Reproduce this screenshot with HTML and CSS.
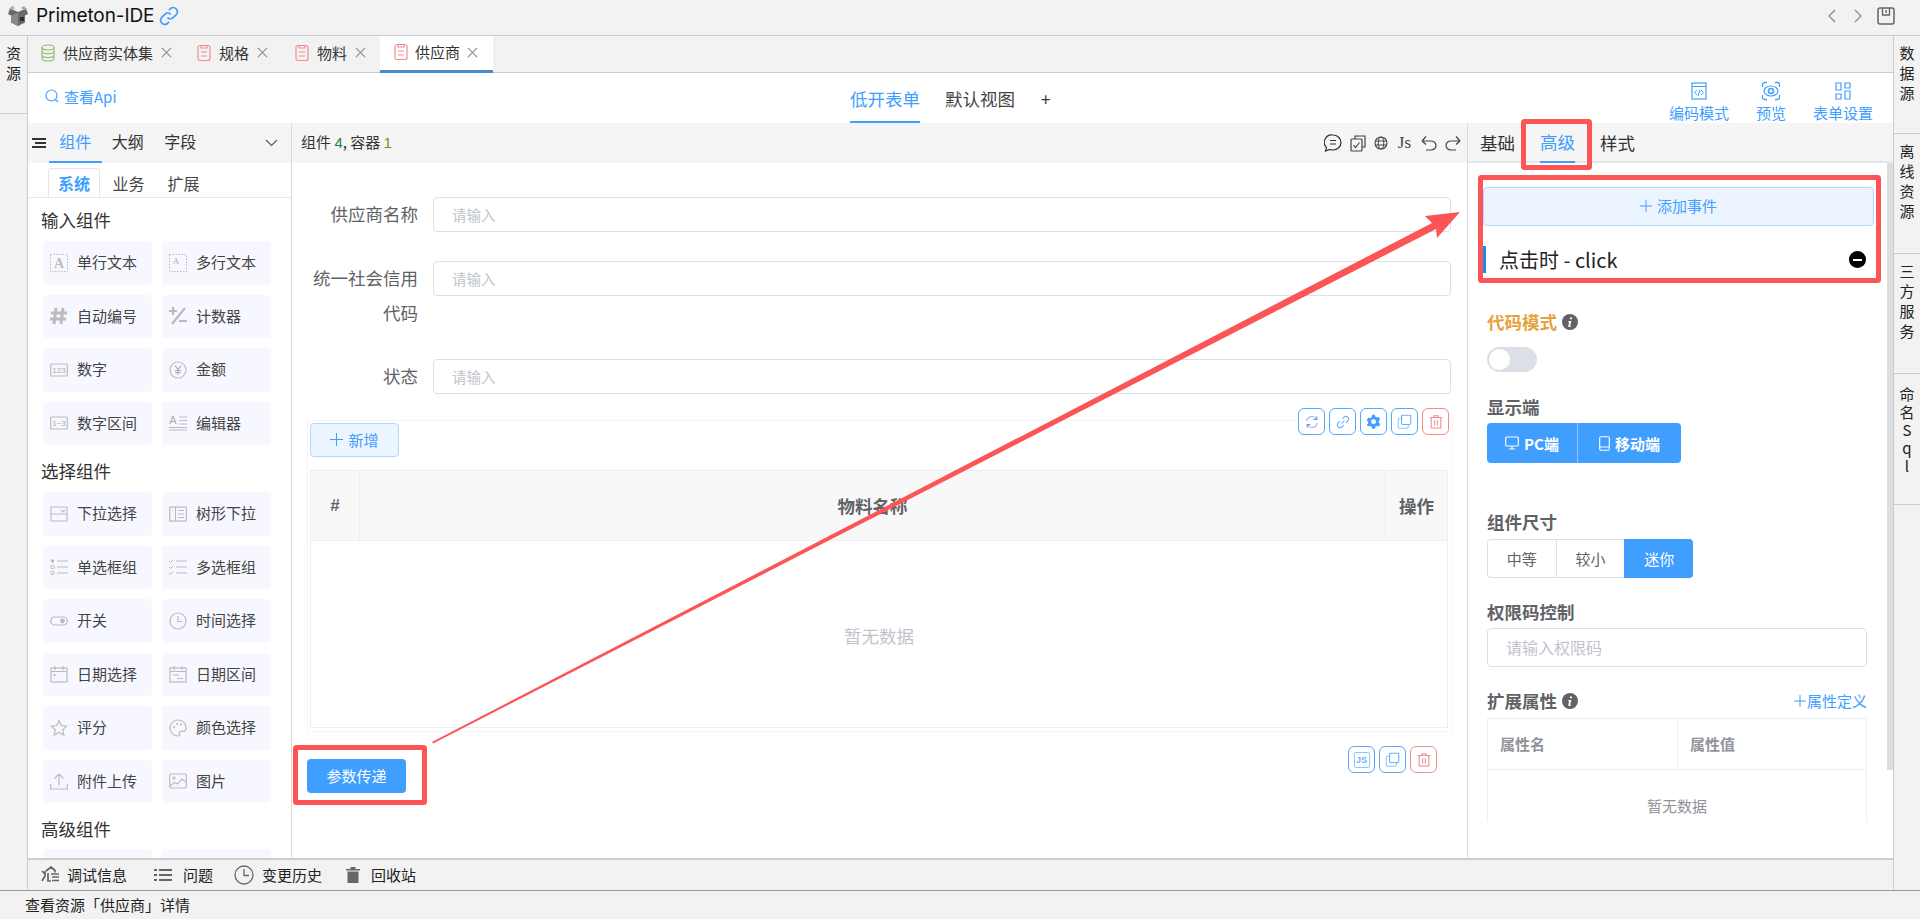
FILE: index.html
```html
<!DOCTYPE html>
<html lang="zh-CN">
<head>
<meta charset="utf-8">
<title>Primeton-IDE</title>
<link rel="stylesheet" href="styles.css">
</head>
<body>
<svg class="defs" width="0" height="0" aria-hidden="true">
  <defs>
    <symbol id="i-doc" viewBox="0 0 14 18"><rect x="1" y="1.5" width="12" height="15" rx="2" fill="none" stroke="currentColor" stroke-width="1.2"/><path d="M4 1.5v2.5h6V1.5M4 8h6M4 12h6" fill="none" stroke="currentColor" stroke-width="1.2"/></symbol>
    <symbol id="i-x" viewBox="0 0 12 12"><path d="M1 1l10 10M11 1L1 11" fill="none" stroke="currentColor" stroke-width="1.1"/></symbol>
    <symbol id="i-info" viewBox="0 0 16 16"><circle cx="8" cy="8" r="8" fill="currentColor"/><path d="M9 3.2a1.1 1.1 0 1 1-.01 0zM6.4 7h3l-1.2 4.6c-.1.4.3.5 1 .1v.9c-1 .6-3.2 1-2.9-.7l.8-3.7H6.3z" fill="#fff"/></symbol>
    <symbol id="i-copy" viewBox="0 0 18 18"><rect x="5.500" y="1.500" width="11" height="11" rx="1" fill="none" stroke="#66b1ff" stroke-width="1.300"/><path d="M5.500 5H3a1.500 1.500 0 0 0-1.500 1.500v9A1.500 1.500 0 0 0 3 17h9a1.500 1.500 0 0 0 1.500-1.500v-3" fill="none" stroke="#8cc5ff" stroke-width="1.300"/></symbol>
    <symbol id="i-trash" viewBox="0 0 16 16"><path d="M1 3.500h14M5.500 3.500V1.500h5v2M2.500 3.500v12h11v-12M6.500 6.500v6M9.500 6.500v6" fill="none" stroke="#f78989" stroke-width="1.200"/></symbol>
  </defs>
</svg>

<div class="app">
  <header class="topbar">
    <svg class="logo" width="22" height="22" viewBox="0 0 22 22"><path d="M11 7L3 3.500 1 9l3 1.500v7l7 3.500 7-3.500v-7L21 9l-2-5.500z" fill="#6a6a6a"/><path d="M11 8l-7 2.500v7l7 3.500z" fill="#8a8a8a"/><path d="M2 4l3-3 3 2-3 2zM20 4l-3-3-3 2 3 2z" fill="#a8a8a8"/><rect x="13" y="12" width="4" height="4" fill="#2e2e2e"/></svg>
    <span class="app-title">Primeton-IDE</span>
    <svg class="link-icon" width="20" height="20" viewBox="0 0 24 24"><path d="M10 14a5 5 0 0 0 7 0l4-4a5 5 0 0 0-7-7l-2 2M14 10a5 5 0 0 0-7 0l-4 4a5 5 0 0 0 7 7l2-2" fill="none" stroke="#409eff" stroke-width="2"/></svg>
    <div class="top-right">
      <svg width="10" height="16" viewBox="0 0 10 16"><path d="M8 2L2 8l6 6" fill="none" stroke="#888" stroke-width="1.200"/></svg>
      <svg width="10" height="16" viewBox="0 0 10 16"><path d="M2 2l6 6-6 6" fill="none" stroke="#888" stroke-width="1.200"/></svg>
      <svg class="save-icon" width="18" height="18" viewBox="0 0 18 18"><rect x="1" y="1" width="16" height="16" rx="2" fill="none" stroke="#666" stroke-width="1.500"/><path d="M5.500 1v7h7V1M9 3v3" fill="none" stroke="#666" stroke-width="1.300"/></svg>
    </div>
  </header>

  <div class="workspace">
    <aside class="rail rail-left">
      <div class="rail-item rail-item-short">资<br>源</div>
    </aside>

    <div class="center">
      <nav class="tabs">
        <div class="tab tab-first">
          <svg class="tab-icon tab-icon-db" width="14" height="18" viewBox="0 0 14 18"><ellipse cx="7" cy="3.500" rx="6" ry="2.500" fill="none" stroke="currentColor" stroke-width="1.200"/><path d="M1 3.500v11c0 1.400 2.700 2.500 6 2.500s6-1.100 6-2.500v-11M1 7.200c0 1.400 2.700 2.500 6 2.500s6-1.100 6-2.500M1 11c0 1.400 2.700 2.500 6 2.500s6-1.100 6-2.500" fill="none" stroke="currentColor" stroke-width="1.200"/></svg>
          <span>供应商实体集</span>
          <svg class="tab-close" width="11" height="11"><use href="#i-x"/></svg>
        </div>
        <div class="tab">
          <svg class="tab-icon" width="14" height="18"><use href="#i-doc"/></svg>
          <span>规格</span>
          <svg class="tab-close" width="11" height="11"><use href="#i-x"/></svg>
        </div>
        <div class="tab">
          <svg class="tab-icon" width="14" height="18"><use href="#i-doc"/></svg>
          <span>物料</span>
          <svg class="tab-close" width="11" height="11"><use href="#i-x"/></svg>
        </div>
        <div class="tab tab-active">
          <svg class="tab-icon" width="14" height="18"><use href="#i-doc"/></svg>
          <span>供应商</span>
          <svg class="tab-close" width="11" height="11"><use href="#i-x"/></svg>
        </div>
      </nav>

      <div class="toolbar">
        <div class="api-link">
          <svg width="14" height="14" viewBox="0 0 14 14"><circle cx="6.500" cy="6.500" r="5.500" fill="none" stroke="#409eff" stroke-width="1.100"/><path d="M10.500 10.500l2.500 2.500" stroke="#409eff" stroke-width="1.100"/></svg>
          <span>查看Api</span>
        </div>
        <div class="view-tabs">
          <span class="view-tab view-tab-active">低开表单</span>
          <span class="view-tab">默认视图</span>
          <span class="view-add">+</span>
        </div>
        <div class="tool-actions">
          <div class="tool-action">
            <svg width="18" height="20" viewBox="0 0 18 20"><rect x="2" y="2" width="14" height="16" fill="none" stroke="#409eff" stroke-width="1.200"/><path d="M2 5.500h14M7 9l-2.500 2.500L7 14M11 9l2.500 2.500L11 14M10 8.500l-2 6.500" fill="none" stroke="#409eff" stroke-width="1"/></svg>
            <span>编码模式</span>
          </div>
          <div class="tool-action">
            <svg width="20" height="20" viewBox="0 0 20 20"><path d="M1.500 6V3.500a2 2 0 0 1 2-2H6M14 1.500h2.500a2 2 0 0 1 2 2V6M18.500 14v2.500a2 2 0 0 1-2 2H14M6 18.500H3.500a2 2 0 0 1-2-2V14" fill="none" stroke="#409eff" stroke-width="1.300"/><ellipse cx="10" cy="10" rx="7" ry="5" fill="none" stroke="#409eff" stroke-width="1.200"/><circle cx="10" cy="10" r="2.500" fill="none" stroke="#409eff" stroke-width="1.500"/></svg>
            <span>预览</span>
          </div>
          <div class="tool-action">
            <svg width="18" height="20" viewBox="0 0 18 20"><path d="M2 2h5v7H2zM11 2h5v5h-5zM2 13h5v5H2zM11 10h5v8h-5z" fill="none" stroke="#409eff" stroke-width="1.200"/></svg>
            <span>表单设置</span>
          </div>
        </div>
      </div>

      <div class="editor">
        <section class="palette">
          <div class="pal-head">
            <svg class="pal-menu" width="14" height="10" viewBox="0 0 14 10"><path d="M0 1h14M3 5h11M0 9h14" stroke="#333" stroke-width="2"/></svg>
            <span class="pal-tab pal-tab-active">组件</span>
            <span class="pal-tab">大纲</span>
            <span class="pal-tab">字段</span>
            <svg class="pal-chev" width="13" height="8" viewBox="0 0 13 8"><path d="M1 1l5.500 5.500L12 1" fill="none" stroke="#555" stroke-width="1.100"/></svg>
          </div>
          <div class="pal-sub">
            <span class="sub-tab sub-tab-active">系统</span>
            <span class="sub-tab">业务</span>
            <span class="sub-tab">扩展</span>
          </div>
          <div class="pal-body">
            <h3 class="pal-title">输入组件</h3>
            <div class="pal-grid">
              <div class="pal-item"><svg width="18" height="18" viewBox="0 0 18 18"><rect x=".5" y=".5" width="17" height="17" fill="none" stroke="#bbb" stroke-dasharray="1.500 1.500"/><text x="9" y="14" class="svg-a">A</text></svg><span>单行文本</span></div>
              <div class="pal-item"><svg width="18" height="18" viewBox="0 0 18 18"><rect x=".5" y=".5" width="17" height="17" fill="none" stroke="#bbb" stroke-dasharray="1.500 1.500"/><text x="7" y="10" class="svg-a-s">A</text></svg><span>多行文本</span></div>
              <div class="pal-item"><svg width="18" height="18" viewBox="0 0 18 18"><path d="M6 1L4 17M13 1l-2 16M1 6h16M0 12h16" stroke="#bbb" stroke-width="3"/></svg><span>自动编号</span></div>
              <div class="pal-item"><svg width="18" height="18" viewBox="0 0 18 18"><path d="M0 4h8M4 0v8M16 1L3 17M10 14h8" stroke="#bbb" stroke-width="2.200" fill="none"/></svg><span>计数器</span></div>
              <div class="pal-item"><svg width="18" height="18" viewBox="0 0 18 18"><rect x=".7" y="3" width="16.600" height="12" rx="1" fill="none" stroke="#bbb" stroke-width="1.200"/><text x="9" y="12" class="svg-n">123</text></svg><span>数字</span></div>
              <div class="pal-item"><svg width="18" height="18" viewBox="0 0 18 18"><circle cx="9" cy="9" r="8" fill="none" stroke="#bbb" stroke-width="1.200"/><path d="M6 4.500l3 4 3-4M9 8.500V14M6 9.500h6M6 11.500h6" fill="none" stroke="#aaa" stroke-width="1.100"/></svg><span>金额</span></div>
              <div class="pal-item"><svg width="18" height="18" viewBox="0 0 18 18"><rect x=".7" y="3" width="16.600" height="12" rx="1" fill="none" stroke="#bbb" stroke-width="1.200"/><text x="9" y="12" class="svg-n">1~3</text></svg><span>数字区间</span></div>
              <div class="pal-item"><svg width="18" height="18" viewBox="0 0 18 18"><text x="4" y="10" class="svg-a-e">A</text><path d="M10 3h8M10 6.500h8M10 10h8M0 13.500h18M0 16h18" stroke="#bbb" stroke-width="1.100"/></svg><span>编辑器</span></div>
            </div>
            <h3 class="pal-title pal-title-next">选择组件</h3>
            <div class="pal-grid">
              <div class="pal-item"><svg width="18" height="18" viewBox="0 0 18 18"><path d="M1 9V2h16v7M1 9h16v7H1zM11 5l2 2 2-2" fill="none" stroke="#bbb" stroke-width="1.100"/></svg><span>下拉选择</span></div>
              <div class="pal-item"><svg width="18" height="18" viewBox="0 0 18 18"><rect x=".7" y="2" width="16.600" height="14" fill="none" stroke="#bbb" stroke-width="1.200"/><path d="M6.500 2v14M9 5.500h6M9 9h6M9 12.500h6M3 5h1.500" stroke="#bbb" stroke-width="1.100"/></svg><span>树形下拉</span></div>
              <div class="pal-item"><svg width="18" height="18" viewBox="0 0 18 18"><circle cx="2.500" cy="3" r="1.800" fill="#bbb"/><circle cx="2.500" cy="9" r="1.800" fill="none" stroke="#bbb"/><circle cx="2.500" cy="15" r="1.800" fill="none" stroke="#bbb"/><path d="M7 3h11M7 9h11M7 15h11" stroke="#bbb" stroke-width="1.200"/></svg><span>单选框组</span></div>
              <div class="pal-item"><svg width="18" height="18" viewBox="0 0 18 18"><path d="M0 3l1.500 1.500L4 2M0 9l1.500 1.500L4 8M0 15l1.500 1.500L4 14" fill="none" stroke="#bbb"/><path d="M7 3h11M7 9h11M7 15h11" stroke="#bbb" stroke-width="1.200"/></svg><span>多选框组</span></div>
              <div class="pal-item"><svg width="18" height="18" viewBox="0 0 18 18"><rect x=".7" y="5" width="16.600" height="8" rx="4" fill="none" stroke="#bbb" stroke-width="1.200"/><circle cx="12.500" cy="9" r="2.400" fill="#bbb"/></svg><span>开关</span></div>
              <div class="pal-item"><svg width="18" height="18" viewBox="0 0 18 18"><circle cx="9" cy="9" r="8" fill="none" stroke="#bbb" stroke-width="1.200"/><path d="M9 4v5.500h4.500" fill="none" stroke="#bbb" stroke-width="1.200"/></svg><span>时间选择</span></div>
              <div class="pal-item"><svg width="18" height="18" viewBox="0 0 18 18"><rect x="1" y="3" width="16" height="14" fill="none" stroke="#bbb" stroke-width="1.200"/><path d="M1 6.500h16M5 1v4M13 1v4" stroke="#bbb" stroke-width="1.200"/><rect x="3.500" y="9" width="2" height="2" fill="#bbb"/></svg><span>日期选择</span></div>
              <div class="pal-item"><svg width="18" height="18" viewBox="0 0 18 18"><rect x="1" y="3" width="16" height="14" fill="none" stroke="#bbb" stroke-width="1.200"/><path d="M1 6.500h16M5 1v4M13 1v4M4 10h6M8 13.500h6" stroke="#bbb" stroke-width="1.200"/></svg><span>日期区间</span></div>
              <div class="pal-item"><svg width="18" height="18" viewBox="0 0 18 18"><path d="M9 1.500l2.300 5 5.400.6-4 3.700 1.100 5.400L9 13.500 4.200 16.200l1.100-5.400-4-3.700 5.400-.6z" fill="none" stroke="#bbb" stroke-width="1.200"/></svg><span>评分</span></div>
              <div class="pal-item"><svg width="18" height="18" viewBox="0 0 18 18"><path d="M9 1a8 8 0 1 0 0 16c1.700 0 1.800-1.300 1.300-2.300-.6-1.300.2-2.400 1.700-2.400h2.500c1.700 0 2.500-1.300 2.500-3.300C17 4.500 13.500 1 9 1z" fill="none" stroke="#bbb" stroke-width="1.200"/><circle cx="5" cy="8" r="1.100" fill="#bbb"/><circle cx="8" cy="5" r="1.100" fill="#bbb"/><circle cx="12" cy="5.500" r="1.100" fill="#bbb"/></svg><span>颜色选择</span></div>
              <div class="pal-item"><svg width="18" height="18" viewBox="0 0 18 18"><path d="M9 13V2M4.500 6.500L9 2l4.500 4.500M.7 12v5h16.600v-5" fill="none" stroke="#bbb" stroke-width="1.200"/></svg><span>附件上传</span></div>
              <div class="pal-item"><svg width="18" height="18" viewBox="0 0 18 18"><rect x=".7" y="2" width="16.600" height="14" rx="1.500" fill="none" stroke="#bbb" stroke-width="1.200"/><circle cx="5" cy="6" r="1.300" fill="none" stroke="#bbb"/><path d="M1 14l4.500-3.500 3 1.500L13 7l4 3" fill="none" stroke="#bbb" stroke-width="1.100"/></svg><span>图片</span></div>
            </div>
            <h3 class="pal-title pal-title-last">高级组件</h3>
            <div class="pal-grid">
              <div class="pal-item"></div>
              <div class="pal-item"></div>
            </div>
          </div>
        </section>

        <section class="canvas">
          <div class="canvas-head">
            <span class="counts">组件 <b class="num-green">4</b>, 容器 <b class="num-olive">1</b></span>
            <div class="canvas-tools">
              <svg width="18" height="18" viewBox="0 0 18 18"><path d="M9 1a8 7.500 0 0 1 0 15c-1 0-2-.1-3-.5L1.500 17l1-3.300A7.500 7.500 0 0 1 9 1z" fill="none" stroke="#333" stroke-width="1.200"/><path d="M6 6.500h6M6 10h6" stroke="#333" stroke-width="1.200"/></svg>
              <svg width="16" height="18" viewBox="0 0 16 18"><path d="M5 5V2h10v11h-3" fill="none" stroke="#444" stroke-width="1.200"/><path d="M8 3v-.5M12 5.500h-1" stroke="#444"/><rect x="1" y="5" width="11" height="12" rx="1" fill="none" stroke="#444" stroke-width="1.200"/><path d="M3.500 11l2 2.500 4-5" fill="none" stroke="#444" stroke-width="1.200"/></svg>
              <svg width="14" height="14" viewBox="0 0 14 14"><circle cx="7" cy="7" r="6" fill="none" stroke="#444" stroke-width="1.100"/><ellipse cx="7" cy="7" rx="2.800" ry="6" fill="none" stroke="#444"/><path d="M1 5h12M1 9h12" stroke="#444"/></svg>
              <span class="js-text">Js</span>
              <svg width="16" height="16" viewBox="0 0 16 16"><path d="M1 6h9a5 4.500 0 0 1 0 9H5M1 6l4-4.500M1 6l4 3.500" fill="none" stroke="#444" stroke-width="1.200"/></svg>
              <svg width="16" height="16" viewBox="0 0 16 16"><path d="M15 6H6a5 4.500 0 0 0 0 9h5M15 6l-4-4.500M15 6l-4 3.500" fill="none" stroke="#444" stroke-width="1.200"/></svg>
            </div>
          </div>
          <div class="form-area">
            <div class="form-row">
              <label class="form-label">供应商名称</label>
              <div class="input">请输入</div>
            </div>
            <div class="form-row">
              <label class="form-label">统一社会信用代码</label>
              <div class="input">请输入</div>
            </div>
            <div class="form-row">
              <label class="form-label">状态</label>
              <div class="input">请输入</div>
            </div>

            <div class="sub-table">
              <div class="icon-btns icon-btns-top">
                <span class="icon-btn"><svg width="14" height="14" viewBox="0 0 16 16"><path d="M2 7a6 6 0 0 1 11-2.500M14 9a6 6 0 0 1-11 2.500" fill="none" stroke="#9db0ff" stroke-width="1.300"/><path d="M13.500 1.500v3.500H10M2.500 14.500V11H6" fill="none" stroke="#409eff" stroke-width="1.200"/></svg></span>
                <span class="icon-btn"><svg width="14" height="14" viewBox="0 0 16 16"><path d="M6.500 9.500l3-3M7 4.500l2-2a3 3 0 0 1 4.500 4.500l-2 2M9 11.500l-2 2A3 3 0 0 1 2.500 9l2-2" fill="none" stroke="#66b1ff" stroke-width="1.200"/></svg></span>
                <span class="icon-btn"><svg width="15" height="15" viewBox="0 0 16 16"><path d="M6.500.8h3l.5 2 1.700 1 2-.6 1.500 2.600-1.500 1.400v2l1.500 1.400-1.500 2.600-2-.6-1.700 1-.5 2h-3l-.5-2-1.700-1-2 .6L.8 11.600l1.500-1.400v-2L.8 6.800l1.500-3 2 .6 1.700-1z" fill="#409eff"/><circle cx="8" cy="8.200" r="2.600" fill="#fff"/></svg></span>
                <span class="icon-btn"><svg width="15" height="15"><use href="#i-copy"/></svg></span>
                <span class="icon-btn icon-btn-danger"><svg width="14" height="15"><use href="#i-trash"/></svg></span>
              </div>
              <button class="btn-add" type="button"><svg width="13" height="13" viewBox="0 0 13 13"><path d="M6.500 0v13M0 6.500h13" stroke="#409eff"/></svg>新增</button>
              <div class="table">
                <div class="t-head">
                  <div class="t-idx">#</div>
                  <div class="t-col">物料名称</div>
                  <div class="t-op">操作</div>
                </div>
                <div class="t-empty">暂无数据</div>
              </div>
            </div>

            <div class="submit-row">
              <div class="icon-btns icon-btns-bottom">
                <span class="icon-btn"><span class="js-box">JS</span></span>
                <span class="icon-btn"><svg width="15" height="15"><use href="#i-copy"/></svg></span>
                <span class="icon-btn icon-btn-danger"><svg width="14" height="15"><use href="#i-trash"/></svg></span>
              </div>
              <button class="btn-submit" type="button">参数传递</button>
            </div>
          </div>
        </section>

        <section class="props">
          <div class="props-head">
            <span class="props-tab">基础</span>
            <span class="props-tab props-tab-active">高级</span>
            <span class="props-tab">样式</span>
          </div>
          <div class="props-scroll">
            <div class="props-body">
              <button class="btn-event" type="button"><svg width="12" height="12" viewBox="0 0 12 12"><path d="M6 0v12M0 6h12" stroke="#409eff"/></svg>添加事件</button>
              <div class="event-row">
                <span class="event-name">点击时 - click</span>
                <span class="event-remove"></span>
              </div>
              <div class="field-title field-title-code">代码模式 <svg class="info" width="16" height="16"><use href="#i-info"/></svg></div>
              <div class="switch"><span class="switch-knob"></span></div>
              <div class="field-title field-title-device">显示端</div>
              <div class="seg-device">
                <span class="seg-d"><svg width="14" height="14" viewBox="0 0 14 14"><rect x=".7" y="1" width="12.600" height="9" rx="1" fill="none" stroke="#fff" stroke-width="1.100"/><path d="M4 13h6M7 10v3" stroke="#fff" stroke-width="1.100"/></svg>PC端</span>
                <span class="seg-d"><svg width="11" height="15" viewBox="0 0 11 15"><rect x=".7" y=".7" width="9.600" height="13.600" rx="1.200" fill="none" stroke="#fff" stroke-width="1.100"/><path d="M1 11h9" stroke="#fff"/></svg>移动端</span>
              </div>
              <div class="field-title field-title-size">组件尺寸</div>
              <div class="seg-size">
                <span class="seg-s">中等</span>
                <span class="seg-s">较小</span>
                <span class="seg-s seg-s-on">迷你</span>
              </div>
              <div class="field-title field-title-perm">权限码控制</div>
              <div class="input input-perm">请输入权限码</div>
              <div class="field-head">
                <div class="field-title">扩展属性 <svg class="info" width="16" height="16"><use href="#i-info"/></svg></div>
                <span class="attr-def"><svg width="12" height="12" viewBox="0 0 12 12"><path d="M6 0v12M0 6h12" stroke="#409eff"/></svg>属性定义</span>
              </div>
              <div class="attr-table">
                <div class="attr-head"><span>属性名</span><span>属性值</span></div>
                <div class="attr-empty">暂无数据</div>
              </div>
            </div>
            <div class="scrollbar"></div>
          </div>
        </section>
      </div>

      <footer class="dock">
        <span class="dock-item"><svg width="18" height="17" viewBox="0 0 18 17"><path d="M5 5l5-4 4 3.500v2M4 5v5l-3 5M1 5l3 3M7 7v8h3" fill="none" stroke="#666" stroke-width="1.700"/><path d="M10 8h8M11 11h7M11 14.500h7" stroke="#666" stroke-width="1.700"/></svg>调试信息</span>
        <span class="dock-item dock-item-list"><svg width="18" height="14" viewBox="0 0 18 14"><path d="M0 2h3M5 2h13M0 7h3M5 7h13M0 12h3M5 12h13" stroke="#666" stroke-width="2"/></svg>问题</span>
        <span class="dock-item dock-item-hist"><svg width="20" height="20" viewBox="0 0 20 20"><circle cx="10" cy="10" r="9" fill="none" stroke="#666" stroke-width="1.300"/><path d="M10 4v6.500h5" fill="none" stroke="#666" stroke-width="1.300"/></svg>变更历史</span>
        <span class="dock-item dock-item-bin"><svg width="14" height="17" viewBox="0 0 14 17"><path d="M0 3h14v1.500H0zM4.500 1h5v2h-5zM1.500 5.500h11V17h-11z" fill="#666"/></svg>回收站</span>
      </footer>
    </div>

    <aside class="rail rail-right">
      <div class="rail-item rail-r1">数<br>据<br>源</div>
      <div class="rail-item rail-r2">离<br>线<br>资<br>源</div>
      <div class="rail-item rail-r2">三<br>方<br>服<br>务</div>
      <div class="rail-item rail-r3">命<br>名<br>S<br>q<br>l</div>
    </aside>
  </div>

  <div class="statusbar">查看资源「供应商」详情</div>
</div>

<svg class="annotations" width="1920" height="919" viewBox="0 0 1920 919" aria-hidden="true">
  <rect class="anno-box" x="295.500" y="747.500" width="129" height="55" rx="1"/>
  <rect class="anno-box" x="1523.500" y="121.500" width="66" height="46" rx="1"/>
  <rect class="anno-box" x="1480.500" y="177.500" width="398" height="103" rx="1"/>
  <polygon class="anno-arrow" points="432,742 1432,223 1425,216 1460,212 1437,238 1436,229 433,743.500"/>
</svg>
</body>
</html>
```

FILE: styles.css
```css
* { box-sizing: border-box; }
html, body { margin: 0; padding: 0; height: 100%; overflow: hidden; }
body {
  font-family: "Noto Sans CJK SC", "Noto Sans", sans-serif;
  color: #333;
  background: #f2f2f2;
  position: relative;
}
.defs { position: absolute; }
.app { display: flex; flex-direction: column; height: 919px; width: 1920px; }

/* top */
.topbar {
  height: 36px; flex: none; display: flex; align-items: center;
  padding: 0 25px 4px 7px; border-bottom: 1px solid #ccc; background: #f2f2f2;
}
.logo { flex: none; }
.app-title { font: 19px/28px Inter, "Liberation Sans", sans-serif; color: #111; margin-left: 7px; letter-spacing: -.1px; }
.link-icon { margin-left: 5px; }
.top-right { margin-left: auto; display: flex; align-items: center; gap: 16px; }
.save-icon { margin-left: -2px; }

.workspace { flex: 1; display: flex; min-height: 0; }

/* rails */
.rail { flex: none; background: #f2f2f2; font-size: 15px; line-height: 20px; text-align: center; color: #222; }
.rail-left { width: 28px; border-right: 1px solid #ccc; }
.rail-right { width: 27px; border-left: 1px solid #ccc; }
.rail-item { border-bottom: 1px solid #ccc; padding-top: 7px; }
.rail-item-short { height: 78px; }
.rail-r1 { height: 98px; }
.rail-r2 { height: 120px; }
.rail-r3 { height: 131px; line-height: 18px; padding-top: 11px; }

.center { flex: 1; min-width: 0; display: flex; flex-direction: column; }

/* tabs */
.tabs { height: 37px; flex: none; display: flex; border-bottom: 1px solid #ccc; font-size: 15px; color: #333; padding-left: 13px; }
.tab { display: flex; align-items: center; gap: 8px; padding-bottom: 3px; margin-right: 27px; line-height: 20px; }
.tab-first { margin-right: 25px; }
.tab-icon { color: #f28c8c; flex: none; }
.tab-icon-db { color: #8fc46f; }
.tab-close { color: #888; margin-left: 0; }
.tab-active {
  background: #fff; margin: 0 0 -1px -13px; padding: 0 15px 2px 14px; border-bottom: 3px solid #4a8ccb; height: 37px; gap: 7px;
}

/* toolbar */
.toolbar {
  height: 50px; flex: none; background: #fff; display: grid; grid-template-columns: 822px auto 1fr; align-items: stretch;
}
.api-link { display: flex; align-items: center; gap: 5px; font-size: 15px; color: #409eff; padding: 0 0 4px 17px; }
.view-tabs { display: flex; align-items: stretch; gap: 25px; font-size: 17.500px; color: #444; }
.view-tab { display: flex; align-items: center; padding-top: 2px; border-bottom: 2px solid transparent; }
.view-tab-active { color: #409eff; border-bottom-color: #409eff; }
.view-add { display: flex; align-items: center; margin-left: 1px; font-size: 17px; color: #333; }
.tool-actions { display: flex; justify-content: flex-end; gap: 27px; padding-right: 20px; }
.tool-action { display: flex; flex-direction: column; align-items: center; justify-content: flex-start; padding-top: 8px; color: #409eff; font-size: 15px; line-height: 20px; }
.tool-action svg { margin-bottom: 2px; }

/* editor */
.editor { flex: 1; min-height: 0; display: flex; background: #fff; }

/* palette */
.palette { width: 264px; flex: none; border-right: 1px solid #d9d9d9; display: flex; flex-direction: column; min-height: 0; background: #fff; }
.pal-head { height: 40px; flex: none; background: #f5f5f5; display: flex; align-items: stretch; padding-left: 4px; position: relative; font-size: 16px; color: #333; }
.pal-menu { align-self: center; margin-right: 3px; }
.pal-tab { width: 52.500px; text-align: center; line-height: 36px; border-bottom: 2px solid transparent; }
.pal-tab-active { color: #409eff; border-bottom-color: #409eff; }
.pal-chev { position: absolute; right: 13px; top: 16px; }
.pal-sub { height: 35px; flex: none; display: flex; border-bottom: 1px solid #e8e8e8; padding: 5px 0 0 20px; font-size: 16px; color: #444; }
.sub-tab { width: 55px; text-align: center; line-height: 30px; }
.sub-tab-active { width: 52px; margin-right: 1px; color: #409eff; font-weight: 700; border: 1px solid #e4e7ed; border-bottom: 0; border-radius: 3px 3px 0 0; line-height: 29px; }
.pal-body { flex: 1; min-height: 0; overflow: hidden; padding: 10px 20px 0 15px; }
.pal-title { margin: 0 0 10px -2px; font-size: 17.500px; line-height: 23px; font-weight: 400; color: #333; }
.pal-title-next { margin-top: 14px; margin-bottom: 10px; }
.pal-title-last { margin-top: 14px; margin-bottom: 9px; }
.pal-grid { display: grid; grid-template-columns: 109px 109px; column-gap: 10px; row-gap: 10px; grid-auto-rows: 43.500px; }
.pal-item { background: #f7f8ff; border-radius: 4px; display: flex; align-items: center; gap: 9px; padding-left: 7px; font-size: 15px; color: #444; }
.pal-item span { margin-bottom: 2px; }
.svg-a { font: 700 14px "Liberation Serif", serif; fill: #bbb; text-anchor: middle; }
.svg-a-s { font: 9px "Liberation Serif", serif; fill: #aaa; text-anchor: middle; }
.svg-a-e { font: 11px "Liberation Sans", sans-serif; fill: #aaa; text-anchor: middle; }
.svg-n { font: 8px "Liberation Sans", sans-serif; fill: #aaa; text-anchor: middle; }

/* canvas */
.canvas { flex: 1; min-width: 0; display: flex; flex-direction: column; }
.canvas-head { height: 40px; flex: none; background: #f5f5f5; display: flex; align-items: center; justify-content: space-between; padding: 0 6px 0 9px; border-right: 1px solid #f5f5f5; }
.counts { font-size: 15px; color: #333; padding-bottom: 4px; }
.num-green, .num-olive { font-weight: 400; font-family: "Liberation Sans", sans-serif; }
.num-green { color: #1a8a3a; }
.num-olive { color: #6a9a1f; }
.canvas-tools { display: flex; align-items: center; gap: 8px; }
.js-text { font: 17px/18px "Liberation Serif", serif; color: #444; margin: 0 2px; }
.form-area { flex: 1; padding: 34px 17px 0 0; position: relative; }
.form-row { display: grid; grid-template-columns: 106px 1fr; column-gap: 15px; margin: 0 0 29px 20px; }
.form-label { font-size: 17.500px; line-height: 34.500px; text-align: right; color: #606266; }
.input { height: 35px; border: 1px solid #dcdfe6; border-radius: 4px; padding-left: 18px; font-size: 14.500px; line-height: 33px; color: #c0c4cc; background: #fff; }

.sub-table { position: relative; margin: -3px -2px 0 15px; padding: 2px 4px 3px 2px; border: 1px solid #f5f5f5; height: 312px; }
.icon-btns { position: absolute; display: flex; gap: 4px; }
.icon-btns-top { top: -13px; right: 3px; }
.icon-btns-bottom { top: -13px; right: 14px; }
.icon-btn { width: 27px; height: 27px; border: 1px solid #53a8ff; border-radius: 6px; display: flex; align-items: center; justify-content: center; background: #fff; }
.icon-btn-danger { border-color: #f78989; }
.js-box { width: 16px; height: 16px; border: 1px solid #8cc5ff; border-radius: 2px; font: 700 9px/14px "Liberation Sans", sans-serif; color: #66b1ff; text-align: center; }
.btn-add { display: flex; align-items: center; justify-content: center; gap: 5px; width: 89px; height: 34px; font: 15px "Noto Sans CJK SC", sans-serif; color: #409eff; background: #ecf5ff; border: 1px solid #b3d8ff; border-radius: 4px; padding: 0 0 2px; }
.table { margin-top: 13px; height: 258px; border: 1px solid #ebeef5; }
.t-head { height: 70px; display: grid; grid-template-columns: 49px 1fr 62px; background: #f8f8f8; border-bottom: 1px solid #ebeef5; font-size: 17.500px; font-weight: 700; color: #606266; }
.t-idx, .t-col, .t-op { display: flex; align-items: center; justify-content: center; }
.t-idx { border-right: 1px solid #ebeef5; font-family: "Liberation Sans", sans-serif; font-size: 17px; }
.t-op { border-left: 1px solid #ebeef5; }
.t-empty { height: 186px; display: flex; align-items: center; justify-content: center; font-size: 17.500px; color: #c0c4cc; padding-top: 3px; }

.submit-row { position: relative; margin: 27px 0 0 15px; }
.btn-submit { display: block; width: 99px; height: 34px; border: 0; border-radius: 4px; background: #409eff; color: #fff; font: 15px "Noto Sans CJK SC", sans-serif; padding: 0 0 2px; }

/* props */
.props { width: 426px; flex: none; margin-left: -1px; border-left: 1px solid #d9d9d9; display: flex; flex-direction: column; min-height: 0; }
.props-head { height: 40px; flex: none; background: #f5f5f5; border-bottom: 2px solid #e4e7ed; display: flex; padding-left: 12px; gap: 25px; font-size: 17.500px; color: #333; }
.props-tab { line-height: 39px; height: 40px; }
.props-tab-active { color: #409eff; border-bottom: 2px solid #409eff; line-height: 37px; }
.props-scroll { flex: 1; min-height: 0; display: flex; }
.props-body { flex: 1; min-width: 0; overflow: hidden; padding: 24px 13px 0 15px; height: 660px; }
.scrollbar { width: 6px; height: 607px; background: #ddd; flex: none; }
.btn-event { display: flex; align-items: center; justify-content: center; gap: 5px; width: 391px; height: 39px; margin-left: 0; font: 15px "Noto Sans CJK SC", sans-serif; color: #409eff; background: #ecf5ff; border: 1px solid #b3d8ff; border-radius: 4px; padding: 0 0 2px; }
.event-row { display: flex; align-items: center; justify-content: space-between; height: 27px; margin: 20px 8px 0 0; border-left: 3px solid #1e88f5; padding-left: 13px; }
.event-name { font: 20px/27px "Noto Sans CJK SC", sans-serif; color: #222; }
.event-remove { width: 17px; height: 17px; border-radius: 50%; background: #000; position: relative; margin-right: 0; }
.event-remove::after { content: ""; position: absolute; left: 4px; right: 4px; top: 7.500px; height: 2px; background: #fff; }
.field-title { display: flex; align-items: center; gap: 5px; margin-left: 4px; font-size: 17.500px; font-weight: 700; line-height: 24px; color: #606266; }
.field-title-code { margin-top: 37px; color: #e6a23c; }
.info { color: #606266; }
.switch { width: 50px; height: 25px; margin: 13px 0 0 4px; border-radius: 13px; background: #dcdfe6; position: relative; }
.switch-knob { position: absolute; left: 2px; top: 2px; width: 21px; height: 21px; border-radius: 50%; background: #fff; }
.field-title-device { margin-top: 23px; }
.seg-device { display: flex; width: 194px; height: 40px; margin: 4px 0 0 4px; background: #409eff; border-radius: 4px; color: #fff; font-size: 15px; font-weight: 700; }
.seg-d { display: flex; align-items: center; justify-content: center; gap: 5px; flex: 1; }
.seg-d + .seg-d { border-left: 1px solid #8cc5ff; flex: 0 0 104px; }
.field-title-size { margin-top: 47px; }
.seg-size { display: flex; width: 206px; height: 39px; margin: 5px 0 0 4px; font-size: 15px; color: #606266; }
.seg-s { flex: 1; display: flex; align-items: center; justify-content: center; border: 1px solid #dcdfe6; border-right: 0; }
.seg-s:first-child { border-radius: 4px 0 0 4px; }
.seg-s-on { background: #409eff; border-color: #409eff; color: #fff; border-radius: 0 4px 4px 0; }
.field-title-perm { margin-top: 22px; }
.input-perm { width: 380px; height: 39px; margin: 4px 0 0 4px; line-height: 37px; font-size: 16px; }
.field-head { display: flex; align-items: center; justify-content: space-between; width: 380px; margin: 22px 0 0 4px; }
.field-head .field-title { margin-left: 0; }
.attr-def { display: flex; align-items: center; gap: 1px; font-size: 15px; color: #409eff; line-height: 20px; }
.attr-table { width: 380px; height: 104px; margin: 5px 0 0 4px; border: 1px solid #ebeef5; border-bottom: 0; overflow: hidden; }
.attr-head { display: grid; grid-template-columns: 1fr 1fr; height: 51px; border-bottom: 1px solid #ebeef5; font-size: 15px; font-weight: 700; color: #909399; }
.attr-head span { padding: 13px 0 0 12px; line-height: 24px; }
.attr-head span + span { border-left: 1px solid #ebeef5; }
.attr-empty { text-align: center; font-size: 15px; line-height: 22px; color: #909399; padding-top: 25px; }

/* dock */
.dock { height: 32px; flex: none; border-top: 2px solid #ccc; background: #f2f2f2; display: flex; align-items: center; font-size: 15px; color: #222; padding: 0 0 1px 13px; }
.dock-item { display: flex; align-items: center; gap: 8px; line-height: 20px; }
.dock-item-list { margin-left: 27px; gap: 11px; }
.dock-item-hist { margin-left: 21px; gap: 8px; }
.dock-item-bin { margin-left: 24px; gap: 11px; }

/* status */
.statusbar { height: 29px; flex: none; border-top: 1px solid #999; background: #f2f2f2; font-size: 15px; line-height: 28px; padding-left: 25px; color: #222; }

/* annotations */
.annotations { position: absolute; left: 0; top: 0; pointer-events: none; }
.anno-box { fill: none; stroke: #fb5555; stroke-width: 5; }
.anno-arrow { fill: #fb5555; }
```
